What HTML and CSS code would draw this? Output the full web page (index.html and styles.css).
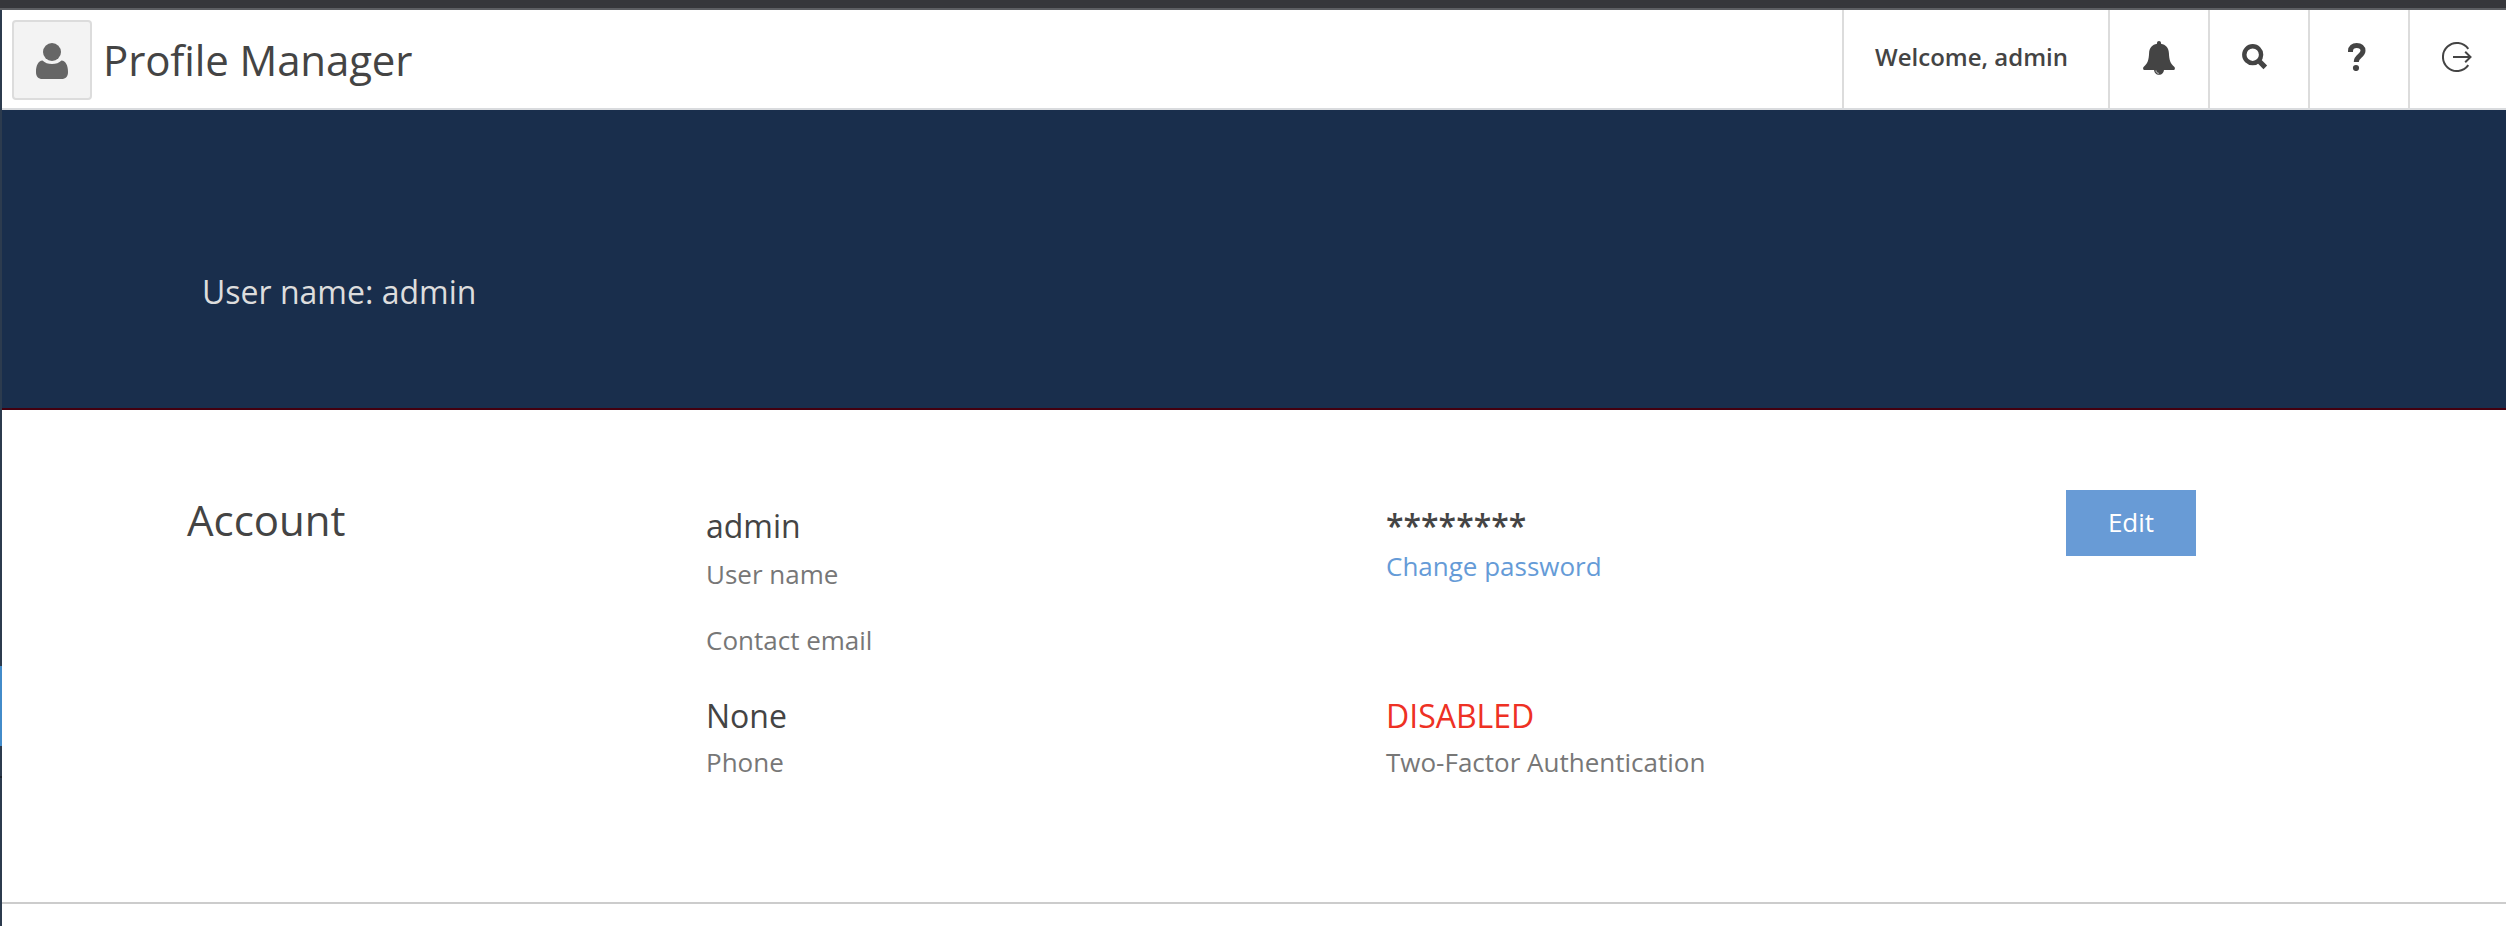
FILE: index.html
```html
<!DOCTYPE html>
<html lang="en">
<head>
<meta charset="utf-8">
<title>Profile Manager</title>
<link rel="stylesheet" href="styles.css">
</head>
<body>
<div class="topbar"></div>
<div class="shell">
  <div class="rail">
    <div class="rail-upper"></div>
    <div class="rail-active"></div>
    <div class="rail-item"></div>
    <div class="rail-lower"></div>
  </div>
  <div class="page">
    <header class="header">
      <div class="brand">
        <div class="avatar">
          <svg width="34" height="37" viewBox="0 0 34 37"><path d="M7.500 17.500c2.500 2.500 5.500 3.500 9.500 3.500s7-1 9.500-3.500c4.200.4 6.500 4.800 6.500 11.500 0 4.700-2.300 7-6.500 7h-19C3.300 36 1 33.700 1 29c0-6.700 2.300-11.100 6.500-11.500z"/><circle cx="17" cy="9" r="10" class="halo"/><circle cx="17" cy="9" r="9"/></svg>
        </div>
        <h1 class="title">Profile Manager</h1>
      </div>
      <nav class="tools">
        <div class="welcome">Welcome, admin</div>
        <a class="tool"><svg width="32" height="34" viewBox="0 0 32 34"><path d="M16 0c1.200 0 2 .9 2 2v.8c4.700.9 7.700 4.200 7.900 9.200.3 7.500 1.600 10.500 5.300 13.800.5.500.8 1 .7 1.600-.1.900-.7 1.600-1.700 1.600H1.800c-1 0-1.600-.7-1.700-1.600-.1-.6.200-1.100.7-1.600C4.500 22.500 5.800 19.500 6.100 12c.2-5 3.200-8.300 7.900-9.200V2c0-1.100.8-2 2-2z"/><path d="M11 28.500h10c0 3-2.200 5.300-5 5.300s-5-2.300-5-5.300z"/><path class="glint" d="M13 29.500c.1 1.700 1 2.600 2.700 2.800"/></svg></a>
        <a class="tool search"><svg width="26" height="26" viewBox="0 0 26 26"><circle cx="10.700" cy="10.700" r="8.400" class="ring"/><path class="handle" d="M16.500 16.500l6.800 6.800"/></svg></a>
        <a class="tool help"><svg width="18" height="28" viewBox="0 0 18 28"><path class="hook" d="M2.500 9V8c0-3.700 2.500-5.500 6.200-5.500 4 0 6.300 2 6.300 5.300 0 5.200-6.700 4.700-6.700 11.200"/><circle cx="8" cy="25" r="3.100"/></svg></a>
        <a class="tool logout"><svg width="30" height="30" viewBox="0 0 30 30"><path class="line" d="M26.300 6.800A14 14 0 1 0 26.300 23.200"/><path class="line" d="M11 15h17.500M23.200 9.700l5.300 5.300-5.300 5.300"/></svg></a>
      </nav>
    </header>
    <section class="banner">User name: admin</section>
    <main class="account">
      <h2 class="heading">Account</h2>
      <div class="column">
        <div class="value">admin</div>
        <div class="label name">User name</div>
        <div class="label email">Contact email</div>
        <div class="value">None</div>
        <div class="label">Phone</div>
      </div>
      <div class="column">
        <div class="value stars">********</div>
        <a class="label link">Change password</a>
        <div class="value disabled">DISABLED</div>
        <div class="label">Two-Factor Authentication</div>
      </div>
      <div class="actions"><button class="edit">Edit</button></div>
    </main>
  </div>
</div>
</body>
</html>
```

FILE: styles.css
```css
* { box-sizing: border-box; }
body {
  margin: 0;
  height: 926px;
  overflow: hidden;
  background: #fff;
  color: #444;
  font-family: "Open Sans", sans-serif;
}
.topbar { height: 10px; background: #36373b; border-bottom: 2px solid #5d5f63; }
.shell { display: flex; height: 916px; }
.rail { display: flex; flex-direction: column; width: 2px; background: #2c3b4e; }
.rail-upper { height: 656px; }
.rail-active { height: 80px; background: #428bca; }
.rail-item { height: 32px; border-bottom: 2px solid #1c2430; }
.page { flex: 1; }
.header {
  display: flex;
  justify-content: space-between;
  height: 100px;
  border-bottom: 2px solid #d9dbde;
}
.brand { display: flex; align-items: center; padding: 2px 0 0 10px; }
.avatar {
  display: flex;
  align-items: center;
  justify-content: center;
  width: 80px;
  height: 80px;
  padding-top: 2px;
  background: #f3f3f3;
  border: 2px solid #dcdcdc;
  border-radius: 4px;
}
.avatar svg { fill: #666; }
.avatar .halo { fill: #f3f3f3; }
.title {
  margin: 0 0 0 11px;
  font-size: 42px;
  font-weight: 400;
  line-height: 60px;
  letter-spacing: -0.13px;
}
.tools { display: flex; }
.welcome {
  width: 266px;
  padding-left: 31px;
  border-left: 2px solid #dcdcdc;
  font-size: 24px;
  font-weight: 600;
  line-height: 94px;
}
.tool {
  display: flex;
  align-items: center;
  justify-content: center;
  width: 100px;
  padding-bottom: 2px;
  border-left: 2px solid #dcdcdc;
}
.tool svg { fill: #444; }
.search { padding: 0 8px 4px 0; }
.help { padding: 0 5px 4px 0; }
.logout { width: 98px; padding: 0 2px 4px 0; }
.ring, .handle, .hook, .line, .glint { fill: none; stroke: #444; }
.ring { stroke-width: 4.400; }
.handle { stroke-width: 5.200; }
.hook { stroke-width: 5; }
.line { stroke-width: 2; }
.glint { stroke: #ddd; stroke-width: 1; }
.banner {
  height: 300px;
  padding: 162px 0 0 200px;
  background: #192e4c;
  border-bottom: 2px solid #43000f;
  color: #ddd;
  font-size: 32px;
  line-height: 40px;
}
.account {
  display: grid;
  grid-template-columns: 519px 680px 680px 1fr;
  height: 494px;
  padding: 80px 0 0 185px;
  border-bottom: 2px solid #ccc;
}
.heading { margin: 0; padding-top: 10px; font-size: 42px; font-weight: 400; line-height: 40px; }
.value { font-size: 32px; line-height: 40px; }
.label { display: block; color: #777; font-size: 26px; line-height: 36px; }
.column { padding-top: 16px; }
.name { margin-top: 10px; }
.email { margin: 30px 0 38px; }
.column .value + .label:last-child { margin-top: 8px; }
.column .link { margin: 2px 0 112px; color: #659bd7; }
.stars { font-weight: 600; }
.disabled { color: #ee3124; }
.edit {
  display: block;
  width: 130px;
  height: 66px;
  padding: 0 0 2px;
  border: 0;
  background: #689bd6;
  color: #fff;
  font: 26px "Open Sans", sans-serif;
}
```
